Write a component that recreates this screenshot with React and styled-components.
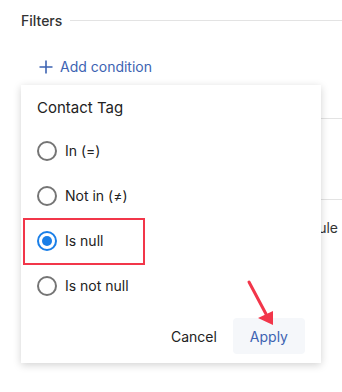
import React from 'react';
import styled, { createGlobalStyle } from 'styled-components';

const GlobalStyle = createGlobalStyle`
  body {
    margin: 0;
    background: #fff;
    font-family: Inter, "Noto Sans", sans-serif;
    color: #222;
  }
`;

const Page = styled.div`
  position: relative;
  width: 342px;
  height: 392px;
  overflow: hidden;
`;

const Header = styled.div`
  display: flex;
  align-items: center;
  gap: 8px;
  padding: 12px 0 0 21px;
  font-size: 14px;
  font-weight: 500;
  color: #333;
  &::after {
    content: '';
    flex: 1;
    height: 1px;
    background: #e3e3e3;
  }
`;

const AddButton = styled.div`
  display: flex;
  align-items: center;
  gap: 7px;
  margin: 29px 0 0 39px;
  font-size: 14px;
  color: #3d63b2;
`;

const BgRow = styled.div`
  height: ${p => p.h}px;
  border-bottom: ${p => (p.line ? '1px solid #e3e3e3' : 'none')};
  margin-left: 21px;
  font-size: 14px;
  color: #333;
  display: flex;
  align-items: flex-end;
  justify-content: flex-end;
  padding-right: 4px;
`;

const Popup = styled.div`
  position: absolute;
  left: 21px;
  top: 85px;
  width: 300px;
  height: 278px;
  background: #fff;
  box-shadow: 0 2px 8px rgba(0, 0, 0, 0.18);
  box-sizing: border-box;
  padding: 12px 16px 0 16px;
  display: flex;
  flex-direction: column;
`;

const Title = styled.div`
  font-size: 15px;
  color: #222;
  height: 22px;
  line-height: 22px;
  margin-bottom: 9px;
`;

const Option = styled.label`
  display: flex;
  align-items: center;
  gap: 8px;
  height: 45px;
  font-size: 14px;
  color: #222;
  position: relative;
`;

const Radio = styled.span`
  width: 20px;
  height: 20px;
  box-sizing: border-box;
  border-radius: 50%;
  border: 2px solid ${p => (p.checked ? '#1a7fe8' : '#757575')};
  display: flex;
  align-items: center;
  justify-content: center;
  &::after {
    content: '';
    display: ${p => (p.checked ? 'block' : 'none')};
    width: 10px;
    height: 10px;
    border-radius: 50%;
    background: #1a7fe8;
  }
`;

const Highlight = styled.span`
  position: absolute;
  left: -14px;
  top: 0;
  width: 122px;
  height: 47px;
  box-sizing: border-box;
  border: 2px solid #f2364a;
`;

const Footer = styled.div`
  display: flex;
  justify-content: flex-end;
  align-items: center;
  gap: 16px;
  margin-top: 10px;
`;

const TextButton = styled.button`
  border: none;
  font-family: inherit;
  font-size: 14px;
  padding: ${p => (p.primary ? '0 17px' : '0')};
  height: 36px;
  border-radius: 4px;
  background: ${p => (p.primary ? '#f5f7fa' : 'transparent')};
  color: ${p => (p.primary ? '#3d63b2' : '#222')};
`;

const Arrow = styled.svg`
  position: absolute;
  left: 244px;
  top: 278px;
`;

const options = [
  { label: 'In (=)' },
  { label: 'Not in (≠)' },
  { label: 'Is null', checked: true },
  { label: 'Is not null' },
];

export default function App() {
  return (
    <Page>
      <GlobalStyle />
      <Header>Filters</Header>
      <AddButton>
        <svg width="14" height="14" viewBox="0 0 14 14">
          <path d="M7 0.5V13.5M0.5 7H13.5" stroke="#3d63b2" strokeWidth="1.6" />
        </svg>
        Add condition
      </AddButton>
      <BgRow h={43} line />
      <BgRow h={80} line />
      <BgRow h={36}>ule</BgRow>
      <Popup>
        <Title>Contact Tag</Title>
        {options.map(o => (
          <Option key={o.label}>
            {o.checked && <Highlight />}
            <Radio checked={o.checked} />
            {o.label}
          </Option>
        ))}
        <Footer>
          <TextButton>Cancel</TextButton>
          <TextButton primary>Apply</TextButton>
        </Footer>
      </Popup>
      <Arrow width="40" height="52" viewBox="0 0 40 52">
        <path d="M5 4 L22 36" stroke="#f2364a" strokeWidth="3" strokeLinecap="round" />
        <path d="M14 40 L29 33 L29 47 Z" fill="#f2364a" />
      </Arrow>
    </Page>
  );
}
